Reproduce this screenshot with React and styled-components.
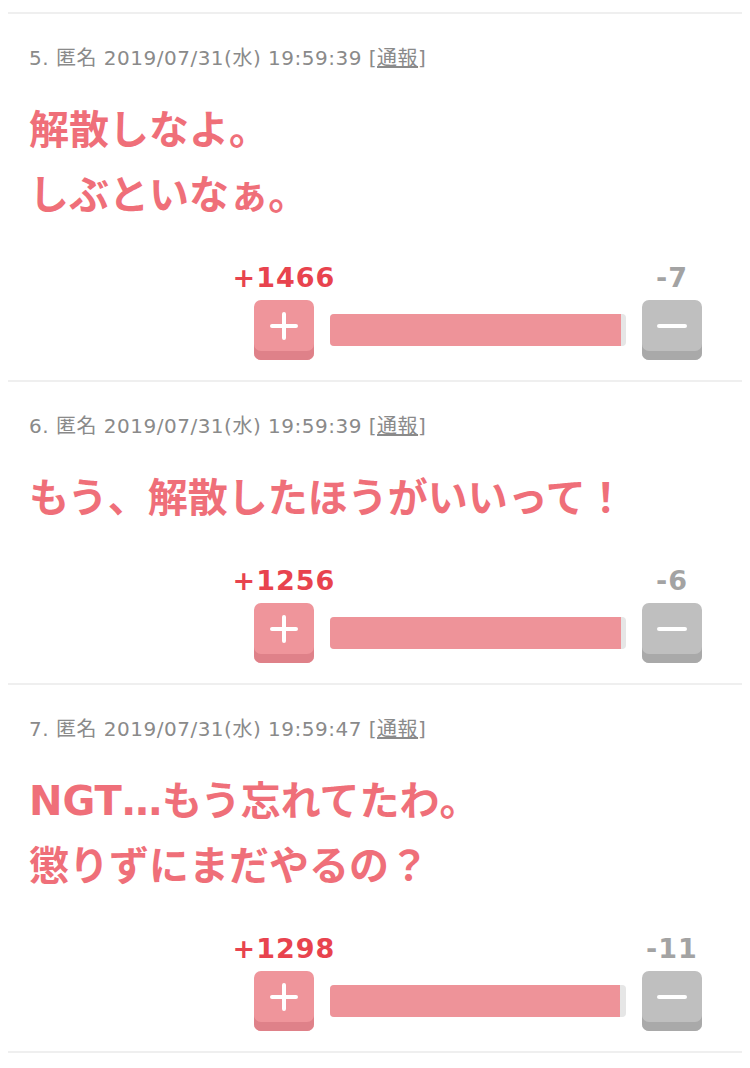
import styled, { createGlobalStyle } from "styled-components";

const GlobalStyle = createGlobalStyle`
  body {
    margin: 0;
    background: #fff;
    font-family: "DejaVu Sans", "Noto Sans CJK JP", sans-serif;
  }
`;

const comments = [
  {
    no: 5,
    date: "2019/07/31(水) 19:59:39",
    lines: ["解散しなよ。", "しぶといなぁ。"],
    plus: 1466,
    minus: 7,
  },
  {
    no: 6,
    date: "2019/07/31(水) 19:59:39",
    lines: ["もう、解散したほうがいいって！"],
    plus: 1256,
    minus: 6,
  },
  {
    no: 7,
    date: "2019/07/31(水) 19:59:47",
    lines: ["NGT…もう忘れてたわ。", "懲りずにまだやるの？"],
    plus: 1298,
    minus: 11,
  },
];

function PlusIcon() {
  return (
    <svg width="28" height="28" viewBox="0 0 28 28">
      <path
        d="M14 2v24M2 14h24"
        stroke="#fff"
        strokeWidth="4"
        strokeLinecap="round"
        fill="none"
      />
    </svg>
  );
}

function MinusIcon() {
  return (
    <svg width="30" height="6" viewBox="0 0 30 6">
      <path
        d="M2 3h26"
        stroke="#fff"
        strokeWidth="4"
        strokeLinecap="round"
        fill="none"
      />
    </svg>
  );
}

export default function App() {
  return (
    <>
      <GlobalStyle />
      <List>
        {comments.map((c) => {
          const pct = (c.plus / (c.plus + c.minus)) * 100;
          return (
            <Comment key={c.no}>
              <Meta>
                {c.no}. 匿名 {c.date} [<Report href="#">通報</Report>]
              </Meta>
              <Body>
                {c.lines.map((l) => (
                  <div key={l}>{l}</div>
                ))}
              </Body>
              <Vote>
                <VoteCol>
                  <Count $plus>+{c.plus}</Count>
                  <VoteBtn $plus>
                    <PlusIcon />
                  </VoteBtn>
                </VoteCol>
                <Bar>
                  <BarFill style={{ width: `calc(${pct}% - 4px)` }} />
                </Bar>
                <VoteCol>
                  <Count>-{c.minus}</Count>
                  <VoteBtn>
                    <MinusIcon />
                  </VoteBtn>
                </VoteCol>
              </Vote>
            </Comment>
          );
        })}
      </List>
    </>
  );
}

const List = styled.div`
  padding: 12px 8px 0;
`;

const Comment = styled.section`
  border-top: 2px solid #efefef;
  padding: 31px 0 20px 21px;

  &:last-child {
    border-bottom: 2px solid #efefef;
  }
`;

const Meta = styled.div`
  font-size: 20px;
  line-height: 26px;
  color: #8a8a8a;
  letter-spacing: 0.5px;
`;

const Report = styled.a`
  color: #8a8a8a;
  text-decoration: underline;
`;

const Body = styled.div`
  margin-top: 27px;
  font-family: "DejaVu Sans", "Noto Sans CJK JP", sans-serif;
  font-weight: bold;
  font-size: 40px;
  line-height: 65px;
  color: #ef6f79;
`;

const Vote = styled.div`
  margin: 35px 40px 0 0;
  display: flex;
  justify-content: flex-end;
  align-items: flex-end;
  gap: 16px;
`;

const VoteCol = styled.div`
  width: 60px;
  display: flex;
  flex-direction: column;
  align-items: center;
  gap: 7px;
`;

const Count = styled.div`
  font-weight: bold;
  font-size: 27px;
  line-height: 30px;
  white-space: nowrap;
  letter-spacing: 1px;
  color: ${(p) => (p.$plus ? "#e8434e" : "#a3a3a3")};
`;

const VoteBtn = styled.div`
  width: 60px;
  height: 60px;
  box-sizing: border-box;
  padding-bottom: 9px;
  border-radius: 7px;
  display: flex;
  align-items: center;
  justify-content: center;
  background: ${(p) => (p.$plus ? "#ef959b" : "#bfbfbf")};
  box-shadow: inset 0 -9px 0 ${(p) => (p.$plus ? "#df8189" : "#a9a9a9")};
`;

const Bar = styled.div`
  width: 296px;
  height: 32px;
  margin-bottom: 14px;
  border-radius: 4px;
  background: #e6e6e6;
  overflow: hidden;
`;

const BarFill = styled.div`
  height: 100%;
  background: #ee9399;
`;
